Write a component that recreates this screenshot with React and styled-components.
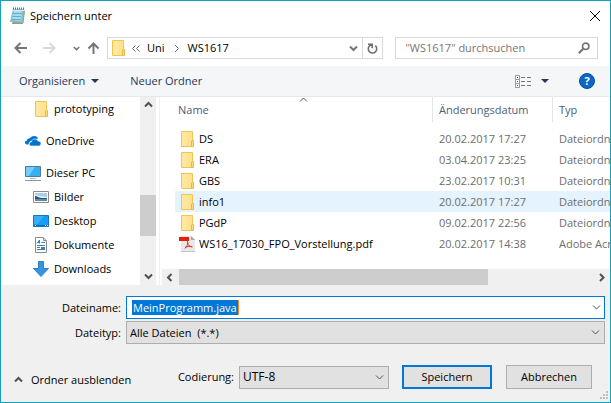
import React from "react";
import styled, { createGlobalStyle } from "styled-components";

const GlobalStyle = createGlobalStyle`
  * { box-sizing: border-box; }
  body { margin: 0; }
  body, button, input, select {
    font-family: "Open Sans", "Noto Sans", sans-serif;
    font-size: 11px;
    line-height: 16px;
    color: #000;
  }
`;

const Dialog = styled.div`
  display: flex;
  flex-direction: column;
  min-height: 100vh;
  border: 1px solid #189fbe;
  background: #fff;
`;

const TitleBar = styled.header`
  display: flex;
  align-items: center;
  gap: 4px;
  height: 29px;
  padding: 0 8px 0 9px;
`;

const Title = styled.h1`
  flex: 1;
  margin: 0;
  font-size: 11px;
  font-weight: 400;
`;

const PlainButton = styled.button`
  display: inline-flex;
  align-items: center;
  justify-content: center;
  flex: none;
  gap: ${(p) => p.$gap || 0}px;
  width: ${(p) => (p.$width ? `${p.$width}px` : "auto")};
  padding: 0;
  border: 0;
  background: none;
  color: ${(p) => p.$color || "#000"};
  white-space: nowrap;
`;

const NavBar = styled.nav`
  display: flex;
  align-items: center;
  gap: 12px;
  height: 36px;
  padding: 0 12px 0 11px;
`;

const NavButtons = styled.div`
  display: flex;
  align-items: center;
  width: 89px;
  justify-content: space-between;
  margin-right: -6px;
`;

const AddressBar = styled.div`
  display: flex;
  flex: 275 1 0;
  height: 22px;
  border: 1px solid #d9d9d9;
`;

const Crumbs = styled.div`
  display: flex;
  flex: 1;
  align-items: center;
  gap: 7px;
  padding: 0 4px;
`;

const Crumb = styled.a`
  color: #000;
  text-decoration: none;
`;

const RefreshButton = styled(PlainButton)`
  border-left: 1px solid #d9d9d9;
`;

const SearchBox = styled.label`
  display: flex;
  flex: 185 1 0;
  min-width: 0;
  align-items: center;
  height: 22px;
  padding: 0 7px 0 9px;
  border: 1px solid #d9d9d9;
`;

const SearchInput = styled.input`
  flex: 1;
  min-width: 0;
  padding: 0;
  border: 0;
  outline: 0;
  background: none;
  &::placeholder { color: #767676; opacity: 1; }
`;

const Toolbar = styled.div`
  display: flex;
  align-items: center;
  gap: 31px;
  height: 31px;
  padding: 0 15px 0 18px;
  border-bottom: 1px solid #e7e8ea;
  background: #f5f6f8;
`;

const ToolbarEnd = styled.div`
  display: flex;
  align-items: center;
  gap: 30px;
  margin-left: auto;
`;

const Body = styled.main`
  display: flex;
  flex: 1;
  min-height: 188px;
`;

const Sidebar = styled.aside`
  display: flex;
  flex: none;
  width: 159px;
  padding-right: 3px;
  border-right: 1px solid #f0f0f0;
`;

const Tree = styled.ul`
  flex: 1;
  margin: 0;
  padding: 0;
  list-style: none;
`;

const TreeItem = styled.li`
  display: flex;
  align-items: center;
  gap: 5px;
  height: 24px;
  margin-top: ${(p) => (p.$group ? 8 : 0)}px;
  padding-left: ${(p) => (p.$nested ? 32 : 24)}px;
`;

const TreeIcon = styled.span`
  display: flex;
  justify-content: center;
  flex: none;
  width: 16px;
`;

const ScrollBar = styled.div`
  display: flex;
  flex: none;
  flex-direction: ${(p) => (p.$horizontal ? "row" : "column")};
  ${(p) => (p.$horizontal ? "height: 16px;" : "width: 16px;")}
  background: #f0f0f0;
`;

const ScrollButton = styled.button`
  display: flex;
  align-items: center;
  justify-content: center;
  flex: none;
  width: 17px;
  height: 17px;
  max-width: 100%;
  max-height: 100%;
  padding: 0;
  border: 0;
  background: none;
`;

const Track = styled.div`
  flex: ${(p) => p.$share} 1 0;
`;

const Thumb = styled(Track)`
  background: #cdcdcd;
`;

const FilePane = styled.section`
  display: flex;
  flex: 1;
  flex-direction: column;
  min-width: 0;
  overflow: hidden;
  padding-left: 2px;
`;

const TableArea = styled.div`
  flex: 1;
  padding-left: 13px;
`;

const SortMark = styled.span`
  position: absolute;
  top: -1px;
  left: 0;
  right: 0;
  display: flex;
  justify-content: center;
`;

const FileTable = styled.table`
  width: 100%;
  table-layout: fixed;
  border-collapse: separate;
  border-spacing: 0;
  tbody::before { content: ""; display: block; height: 6px; }
`;

const HeadCell = styled.th`
  position: relative;
  width: ${(p) => (p.$width ? `${p.$width}px` : "auto")};
  height: 25px;
  padding: 0 0 0 ${(p) => (p.$first ? 3 : 6)}px;
  border-right: ${(p) => (p.$last ? 0 : 1)}px solid #e5e5e5;
  color: #4c607a;
  font-weight: 400;
  text-align: left;
`;

const Row = styled.tr`
  background: ${(p) => (p.$hover ? "#e5f3ff" : "transparent")};
`;

const Cell = styled.td`
  height: 21px;
  padding: 0 0 0 6px;
  overflow: hidden;
  white-space: nowrap;
  color: #6d6d6d;
`;

const NameCell = styled(Cell)`
  padding-left: ${(p) => (p.$pdf ? 4 : 6)}px;
  color: #000;
`;

const FileName = styled.span`
  display: flex;
  align-items: center;
  gap: ${(p) => (p.$pdf ? 4 : 5)}px;
`;

const Footer = styled.footer`
  padding: 11px 5px 3px 0;
  background: #f0f0f0;
`;

const Fields = styled.div`
  display: grid;
  grid-template-columns: 120px 1fr;
  align-items: center;
  gap: 2px 5px;
`;

const FieldLabel = styled.label`
  text-align: right;
`;

const Combo = styled.div`
  display: flex;
  align-items: center;
  justify-content: space-between;
  height: 23px;
  padding: 0 1px 0 5px;
  border: 1px solid #0078d7;
  background: #fff;
`;

const NameInput = styled.input`
  field-sizing: content;
  height: 15px;
  padding: 0 1px;
  border: 0;
  border-right: 1px solid #ff8728;
  outline: 0;
  background: #0078d7;
  color: #fff;
  line-height: 15px;
`;

const SelectWrap = styled.div`
  display: grid;
  align-items: center;
  width: ${(p) => (p.$width ? `${p.$width}px` : "auto")};
  > * { grid-area: 1 / 1; }
  > svg { justify-self: end; margin-right: 5px; pointer-events: none; }
`;

const Select = styled.select`
  appearance: none;
  width: 100%;
  height: 23px;
  padding: 0 20px 0 3px;
  border: 1px solid #adadad;
  border-radius: 0;
  background: #e1e1e1;
  white-space: pre;
  font-size: ${(p) => (p.$large ? 12 : 11)}px;
`;

const Actions = styled.div`
  display: flex;
  align-items: center;
  padding: 21px 13px 0 13px;
`;

const FolderToggle = styled(PlainButton)`
  align-self: flex-end;
  height: 18px;
  margin-right: auto;
`;

const Encoding = styled.div`
  display: flex;
  align-items: center;
  gap: 5px;
  margin-right: 13px;
`;

const PushButton = styled.button`
  width: ${(p) => (p.$primary ? 90 : 86)}px;
  height: 24px;
  padding: 0;
  margin-right: ${(p) => (p.$primary ? 14 : 0)}px;
  border: ${(p) => (p.$primary ? "2px solid #0078d7" : "1px solid #adadad")};
  background: #e1e1e1;
`;

const GripRow = styled.div`
  display: flex;
  justify-content: flex-end;
  padding: 2px 0 0;
  margin-right: -3px;
`;

const HelpButton = styled.button`
  width: 16px;
  height: 16px;
  padding: 0;
  border: 1px solid #0a4f9c;
  border-radius: 50%;
  background: #0b66c6;
  color: #fff;
  font-weight: 700;
  line-height: 14px;
`;

const PATHS = {
  up: "M1 5.5 4.5 2 8 5.5",
  down: "M1 2.5 4.5 6 8 2.5",
  left: "M5.5 1 2 4.5 5.5 8",
  right: "M3 1 6.5 4.5 3 8",
};

const Chevron = ({ dir, size = 9, color = "#505050", weight = 2 }) => (
  <svg width={size} height={size} viewBox="0 0 9 9" fill="none" stroke={color} strokeWidth={weight}>
    <path d={PATHS[dir]} />
  </svg>
);

const Caret = () => (
  <svg width="8" height="4" viewBox="0 0 8 4" fill="#1e395b"><path d="M0 0h8L4 4z" /></svg>
);

const Folder = () => (
  <svg width="13" height="16" viewBox="0 0 13 16">
    <path d="M.5.5h11v15H.5z" fill="#ffe391" stroke="#edc653" />
    <path d="M1 1h5v14H1z" fill="#ffeaa6" opacity=".6" />
    <path d="M10.500 15.500V10l1-.500h1v6z" fill="#ffdc78" stroke="#e4bb45" />
  </svg>
);

const Notepad = () => (
  <svg width="16" height="17" viewBox="0 0 16 17">
    <path d="M13.500 3 15 4l-1.500 12-1 1H2v-1z" fill="#a99465" />
    <path d="M3 2h11l-1 14L0 15z" fill="#7fc0d4" />
    <path d="M4 4h8l-1 10-9-1z" fill="#a9dcea" />
    <path d="M3 6.500h9M3 9.500h8M2 12.500h9" stroke="#64aec8" />
    <path d="M3 1.500h12" stroke="#44798a" strokeWidth="2" strokeDasharray="1 1" />
    <path d="M3 3.500h11" stroke="#d9eef2" />
  </svg>
);

const OneDrive = () => (
  <svg width="16" height="10" viewBox="0 0 16 10" fill="#0072cf">
    <path d="M3.500 8.500H2C.6 8.500 0 7.700 0 6.500s.8-2 2-2.100C2.200 2.700 3.500 2 5 2.200 6 .7 7.500 0 9.200 0c2 0 3.400 1.100 3.800 2.700-2.200-.3-3.800.6-4.700 2.100C5.500 4.500 4 5.500 3.500 8.500z" />
    <path d="M6.300 10C5 10 4.300 9.200 4.300 8s.9-2.200 2.300-2.300c.3-1.800 1.600-2.800 3.300-2.800 1.500 0 2.600.8 3 2.200 1.800-.1 3.100.9 3.100 2.500 0 1.500-1 2.400-2.400 2.400z" stroke="#fff" strokeWidth=".6" />
  </svg>
);

const Computer = () => (
  <svg width="16" height="15" viewBox="0 0 16 15">
    <path d="M.5.5h15v10H.5z" fill="#38aef3" stroke="#477c9d" />
    <path d="M1 1h9L4 10H1z" fill="#73cdfa" />
    <path d="M5 12.500h6" stroke="#b4c0c8" />
    <path d="M0 14.500h16" stroke="#8798a4" />
  </svg>
);

const Picture = () => (
  <svg width="16" height="12" viewBox="0 0 16 12">
    <path d="M.5.500h15v11H.5z" fill="#fff" stroke="#8c8c8c" />
    <path d="M2 2h12v8H2z" fill="#a8ceef" />
    <path d="M2 4c2-1 3 1 5 1s4 1 7 1v2H2z" fill="#e5f0f4" />
    <path d="M2 5c2 0 4 2 7 2h5v1H2z" fill="#37546a" />
    <path d="M2 8h12v2H2z" fill="#558eb3" />
  </svg>
);

const Desktop = () => (
  <svg width="16" height="12" viewBox="0 0 16 12">
    <path d="M.5.500h15v11H.5z" fill="#159cf5" stroke="#1477b9" />
    <path d="M1 1h10L5 9H1z" fill="#3aadf9" />
    <path d="M1 10.500h14" stroke="#0870c2" />
    <path d="M2 10.500h1M12 10.500h1M14 10.500h1" stroke="#fff" />
  </svg>
);

const Document = () => (
  <svg width="12" height="16" viewBox="0 0 12 16">
    <path d="M.5.500h8l3 3v12H.5z" fill="#fff" stroke="#8b8b8b" />
    <path d="M8.500.500v3h3" fill="#ddd" stroke="#8b8b8b" />
    <path d="M2 6.500 4.500 3v3.500M3 5.500h2M6.500 5.500h3.500M2 8.500h8M2 10.500h3M2 12.500h8" fill="none" stroke="#347fb6" />
    <path d="M6 10h4v2H6z" fill="#597789" />
  </svg>
);

const Download = () => (
  <svg width="16" height="16" viewBox="0 0 16 16">
    <path d="M5.500.500h5v7h5L8 15.500.500 7.500h5z" fill="#3795e0" stroke="#2b7fc9" />
  </svg>
);

const Pdf = () => (
  <svg width="16" height="16" viewBox="0 0 16 16">
    <path d="M2 0h10l4 4v12H2z" fill="#e8e8e8" />
    <path d="M12 0v4h4z" fill="#a7a7a7" />
    <path d="M2 15.500h14" stroke="#c4c4c4" />
    <path d="M0 1h10v4H0z" fill="#ed1c05" />
    <path d="M8.500 5c.8 2.300.1 4.500-2.500 7.500M8.500 6.500c.3 2.500 2 4.500 5 4.500M6 11.500c2-1 4-1.400 7-1" fill="none" stroke="#dc3524" />
  </svg>
);

const Arrow = ({ color, d }) => (
  <svg width="13" height="12" viewBox="0 0 13 12" fill="none" stroke={color} strokeWidth="2"><path d={d} /></svg>
);

const tree = [
  { label: "prototyping", icon: Folder, nested: true },
  { label: "OneDrive", icon: OneDrive, group: true },
  { label: "Dieser PC", icon: Computer, group: true },
  { label: "Bilder", icon: Picture, nested: true },
  { label: "Desktop", icon: Desktop, nested: true },
  { label: "Dokumente", icon: Document, nested: true },
  { label: "Downloads", icon: Download, nested: true },
];

const files = [
  { name: "DS", date: "20.02.2017 17:27", type: "Dateiordner" },
  { name: "ERA", date: "03.04.2017 23:25", type: "Dateiordner" },
  { name: "GBS", date: "23.02.2017 10:31", type: "Dateiordner" },
  { name: "info1", date: "20.02.2017 17:27", type: "Dateiordner", hover: true },
  { name: "PGdP", date: "09.02.2017 22:56", type: "Dateiordner" },
  { name: "WS16_17030_FPO_Vorstellung.pdf", date: "20.02.2017 14:38", type: "Adobe Acrobat", pdf: true },
];

export default function App() {
  return (
    <>
      <GlobalStyle />
      <Dialog>
        <TitleBar>
          <Notepad />
          <Title>Speichern unter</Title>
          <PlainButton $width={14} aria-label="Schließen">
            <svg width="10" height="10" viewBox="0 0 10 10" stroke="#000"><path d="M0 0l10 10M10 0L0 10" /></svg>
          </PlainButton>
        </TitleBar>

        <NavBar>
          <NavButtons>
            <PlainButton $width={16} aria-label="Zurück"><Arrow color="#757575" d="M13 6H1.500M6.500 1l-5 5 5 5" /></PlainButton>
            <PlainButton $width={36} aria-label="Vorwärts"><Arrow color="#d8d8d8" d="M0 6h11.500M6.500 1l5 5-5 5" /></PlainButton>
            <PlainButton $width={12} aria-label="Zuletzt besucht"><Chevron dir="down" size={7} color="#757575" /></PlainButton>
            <PlainButton $width={16} aria-label="Nach oben"><Arrow color="#757575" d="M6.500 12V1.500M1.500 6.500l5-5 5 5" /></PlainButton>
          </NavButtons>
          <AddressBar>
            <Crumbs>
              <Folder />
              <svg width="8" height="7" viewBox="0 0 8 7" fill="none" stroke="#606060"><path d="M3.500.500l-3 3 3 3M7.500.500l-3 3 3 3" /></svg>
              <Crumb href="#uni">Uni</Crumb>
              <Chevron dir="right" size={9} color="#707070" weight={1} />
              <Crumb href="#ws1617">WS1617</Crumb>
            </Crumbs>
            <PlainButton $width={18} aria-label="Vorherige Orte"><Chevron dir="down" color="#757575" /></PlainButton>
            <RefreshButton $width={20} aria-label="Aktualisieren">
              <svg width="11" height="11" viewBox="0 0 11 11" fill="none" stroke="#707070" strokeWidth="1.600">
                <path d="M8.300 2.700A4.200 4.200 0 1 1 2.500 2.900L4.500 1.500M1 1.200h4.200V5.200" />
              </svg>
            </RefreshButton>
          </AddressBar>
          <SearchBox>
            <SearchInput aria-label="Suchen" placeholder={'"WS1617" durchsuchen'} />
            <svg width="12" height="12" viewBox="0 0 12 12" fill="none" stroke="#757575" strokeWidth="1.600">
              <circle cx="7.700" cy="4.300" r="3.200" /><path d="M5.300 6.700.8 11.200" strokeWidth="2" />
            </svg>
          </SearchBox>
        </NavBar>

        <Toolbar>
          <PlainButton $gap={6} $color="#1e395b">Organisieren <Caret /></PlainButton>
          <PlainButton $color="#1e395b">Neuer Ordner</PlainButton>
          <ToolbarEnd>
            <PlainButton $gap={9} aria-label="Ansicht ändern">
              <svg width="17" height="13" viewBox="0 0 17 13" fill="none">
                <path d="M.5.500h4v4h-4zM.5 4.500h4v4h-4zM.5 8.500h4v4h-4z" fill="#fff" stroke="#999" />
                <path d="M2 2.500h1" stroke="#333" /><path d="M2 6.500h1" stroke="#06f" /><path d="M2 10.500h1" stroke="#e00" />
                <path d="M6 2.500h4M12 2.500h4M6 6.500h4M12 6.500h4M6 10.500h4M12 10.500h4" stroke="#777" />
              </svg>
              <Caret />
            </PlainButton>
            <HelpButton aria-label="Hilfe">?</HelpButton>
          </ToolbarEnd>
        </Toolbar>

        <Body>
          <Sidebar>
            <Tree>
              {tree.map(({ label, icon: Icon, nested, group }) => (
                <TreeItem key={label} $nested={nested} $group={group}><TreeIcon><Icon /></TreeIcon>{label}</TreeItem>
              ))}
            </Tree>
            <ScrollBar>
              <ScrollButton aria-label="Nach oben scrollen"><Chevron dir="up" /></ScrollButton>
              <Track $share={81} /><Thumb $share={41} /><Track $share={32} />
              <ScrollButton aria-label="Nach unten scrollen"><Chevron dir="down" /></ScrollButton>
            </ScrollBar>
          </Sidebar>
          <FilePane>
            <TableArea>
              <FileTable>
                <thead>
                  <tr>
                    <HeadCell $first>Name<SortMark><Chevron dir="up" color="#555" weight={1} /></SortMark></HeadCell>
                    <HeadCell $width={120}>Änderungsdatum</HeadCell>
                    <HeadCell $width={57} $last>Typ</HeadCell>
                  </tr>
                </thead>
                <tbody>
                  {files.map((f) => (
                    <Row key={f.name} $hover={f.hover}>
                      <NameCell $pdf={f.pdf}><FileName $pdf={f.pdf}>{f.pdf ? <Pdf /> : <Folder />}{f.name}</FileName></NameCell>
                      <Cell>{f.date}</Cell>
                      <Cell>{f.type}</Cell>
                    </Row>
                  ))}
                </tbody>
              </FileTable>
            </TableArea>
            <ScrollBar $horizontal>
              <ScrollButton aria-label="Nach links scrollen"><Chevron dir="left" /></ScrollButton>
              <Thumb $share={310} /><Track $share={105} />
              <ScrollButton aria-label="Nach rechts scrollen"><Chevron dir="right" /></ScrollButton>
            </ScrollBar>
          </FilePane>
        </Body>

        <Footer>
          <Fields>
            <FieldLabel htmlFor="filename">Dateiname:</FieldLabel>
            <Combo>
              <NameInput id="filename" defaultValue="MeinProgramm.java" />
              <PlainButton $width={14} aria-label="Dateinamen anzeigen"><Chevron dir="down" weight={1} /></PlainButton>
            </Combo>
            <FieldLabel htmlFor="filetype">Dateityp:</FieldLabel>
            <SelectWrap>
              <Select id="filetype"><option>{"Alle Dateien\u00a0 (*.*)"}</option></Select>
              <Chevron dir="down" weight={1} />
            </SelectWrap>
          </Fields>
          <Actions>
            <FolderToggle $gap={8}><Chevron dir="up" />Ordner ausblenden</FolderToggle>
            <Encoding>
              <FieldLabel htmlFor="encoding">Codierung:</FieldLabel>
              <SelectWrap $width={150}>
                <Select id="encoding" $large><option>UTF-8</option></Select>
                <Chevron dir="down" weight={1} />
              </SelectWrap>
            </Encoding>
            <PushButton $primary>Speichern</PushButton>
            <PushButton>Abbrechen</PushButton>
          </Actions>
          <GripRow>
            <svg width="8" height="8" viewBox="0 0 8 8" fill="#bfbfbf">
              <path d="M6 0h2v2H6zM3 3h2v2H3zM6 3h2v2H6zM0 6h2v2H0zM3 6h2v2H3zM6 6h2v2H6z" />
            </svg>
          </GripRow>
        </Footer>
      </Dialog>
    </>
  );
}
